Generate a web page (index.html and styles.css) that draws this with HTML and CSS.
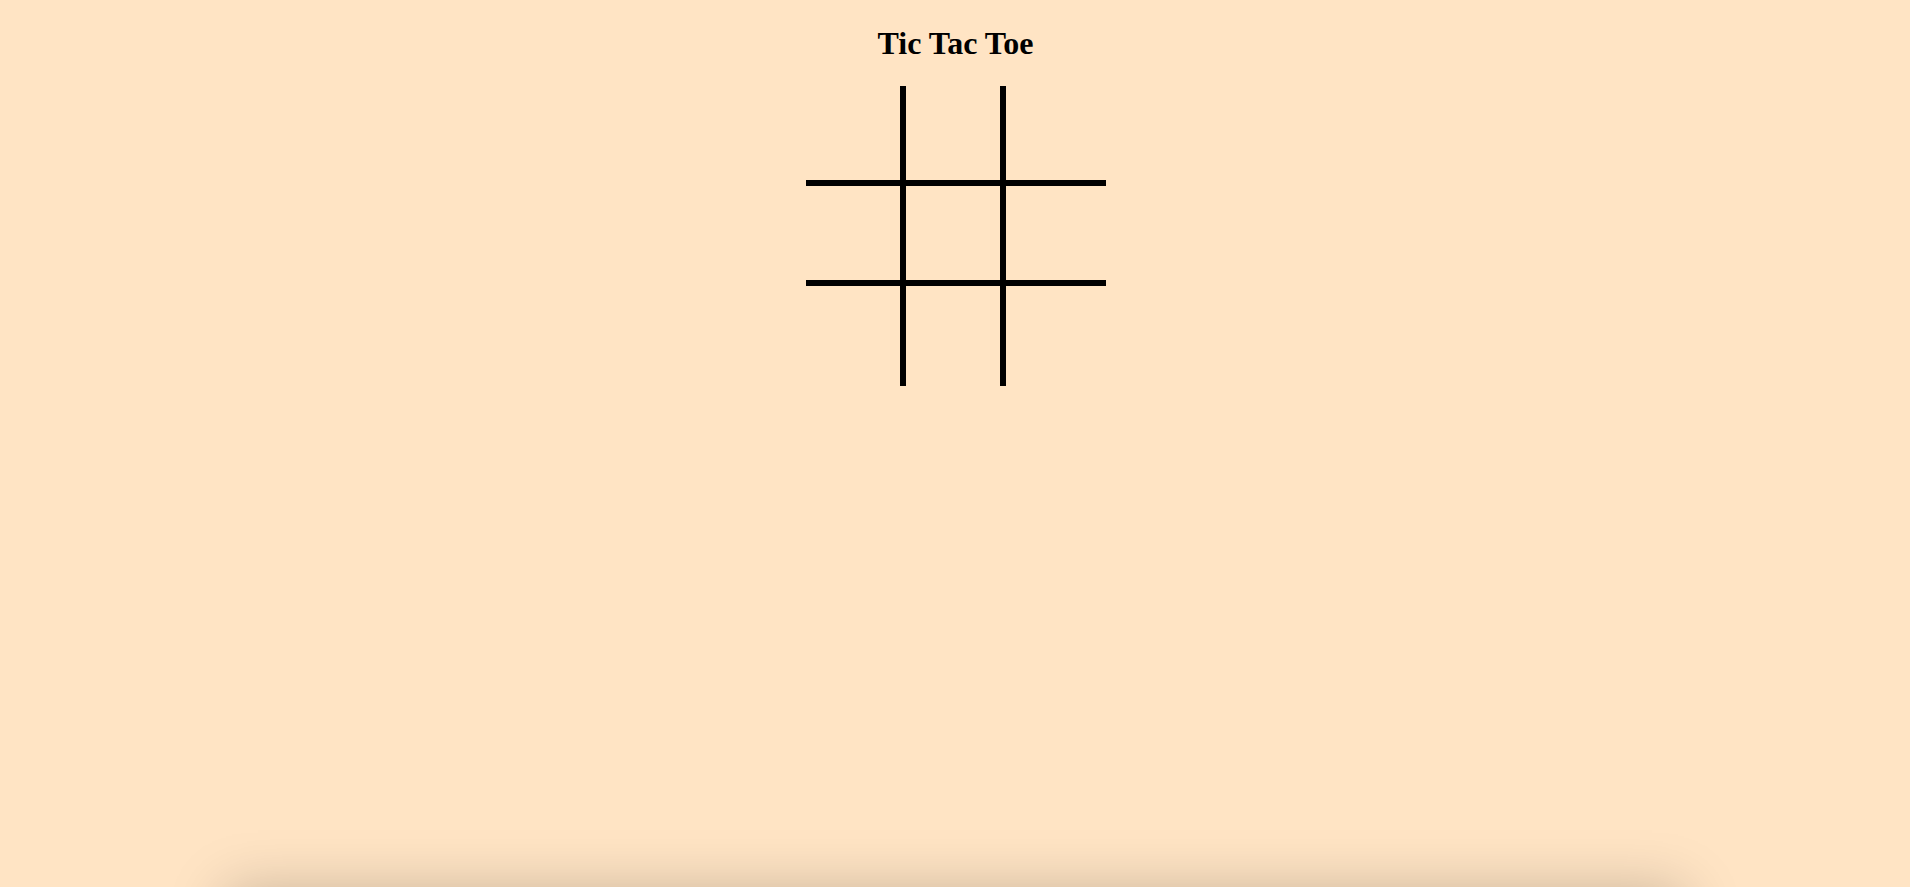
FILE: index.html
```html
<!DOCTYPE html>
<html lang="en">
<head>
<meta charset="utf-8">
<title>Tic Tac Toe</title>
<link rel="stylesheet" href="styles.css">
</head>
<body>
<main class="page">
  <h1 class="title">Tic Tac Toe</h1>
  <div class="board">
    <div class="cell"></div>
    <div class="cell"></div>
    <div class="cell"></div>
    <div class="cell"></div>
    <div class="cell"></div>
    <div class="cell"></div>
    <div class="cell"></div>
    <div class="cell"></div>
    <div class="cell"></div>
  </div>
</main>
<section class="panel"></section>
</body>
</html>
```
FILE: styles.css
```css
html, body {
  background: #ffe4c4;
}
body {
  margin: 8px;
  font-family: "Liberation Serif", "Times New Roman", serif;
}
.page {
  min-height: 882px;
  display: flex;
  flex-direction: column;
  align-items: center;
}
.title {
  font-size: 32px;
  font-weight: bold;
  margin: 17px 0 0;
  line-height: 37px;
  text-align: center;
  padding-left: 1px;
}
.board {
  margin-top: 24px;
  margin-left: 2px;
  width: 300px;
  height: 300px;
  display: grid;
  grid-template-columns: repeat(3, 100px);
  grid-template-rows: repeat(3, 100px);
}
.cell {
  box-sizing: border-box;
  border-right: 6px solid #000;
  border-bottom: 6px solid #000;
}
.cell:nth-child(3n) {
  border-right: none;
}
.cell:nth-child(n+7) {
  border-bottom: none;
}
.panel {
  width: 77%;
  height: 200px;
  margin: 0 auto;
  background: #ffe4c4;
  box-shadow: 0 0 55px rgba(0, 0, 0, 0.22);
}
```
